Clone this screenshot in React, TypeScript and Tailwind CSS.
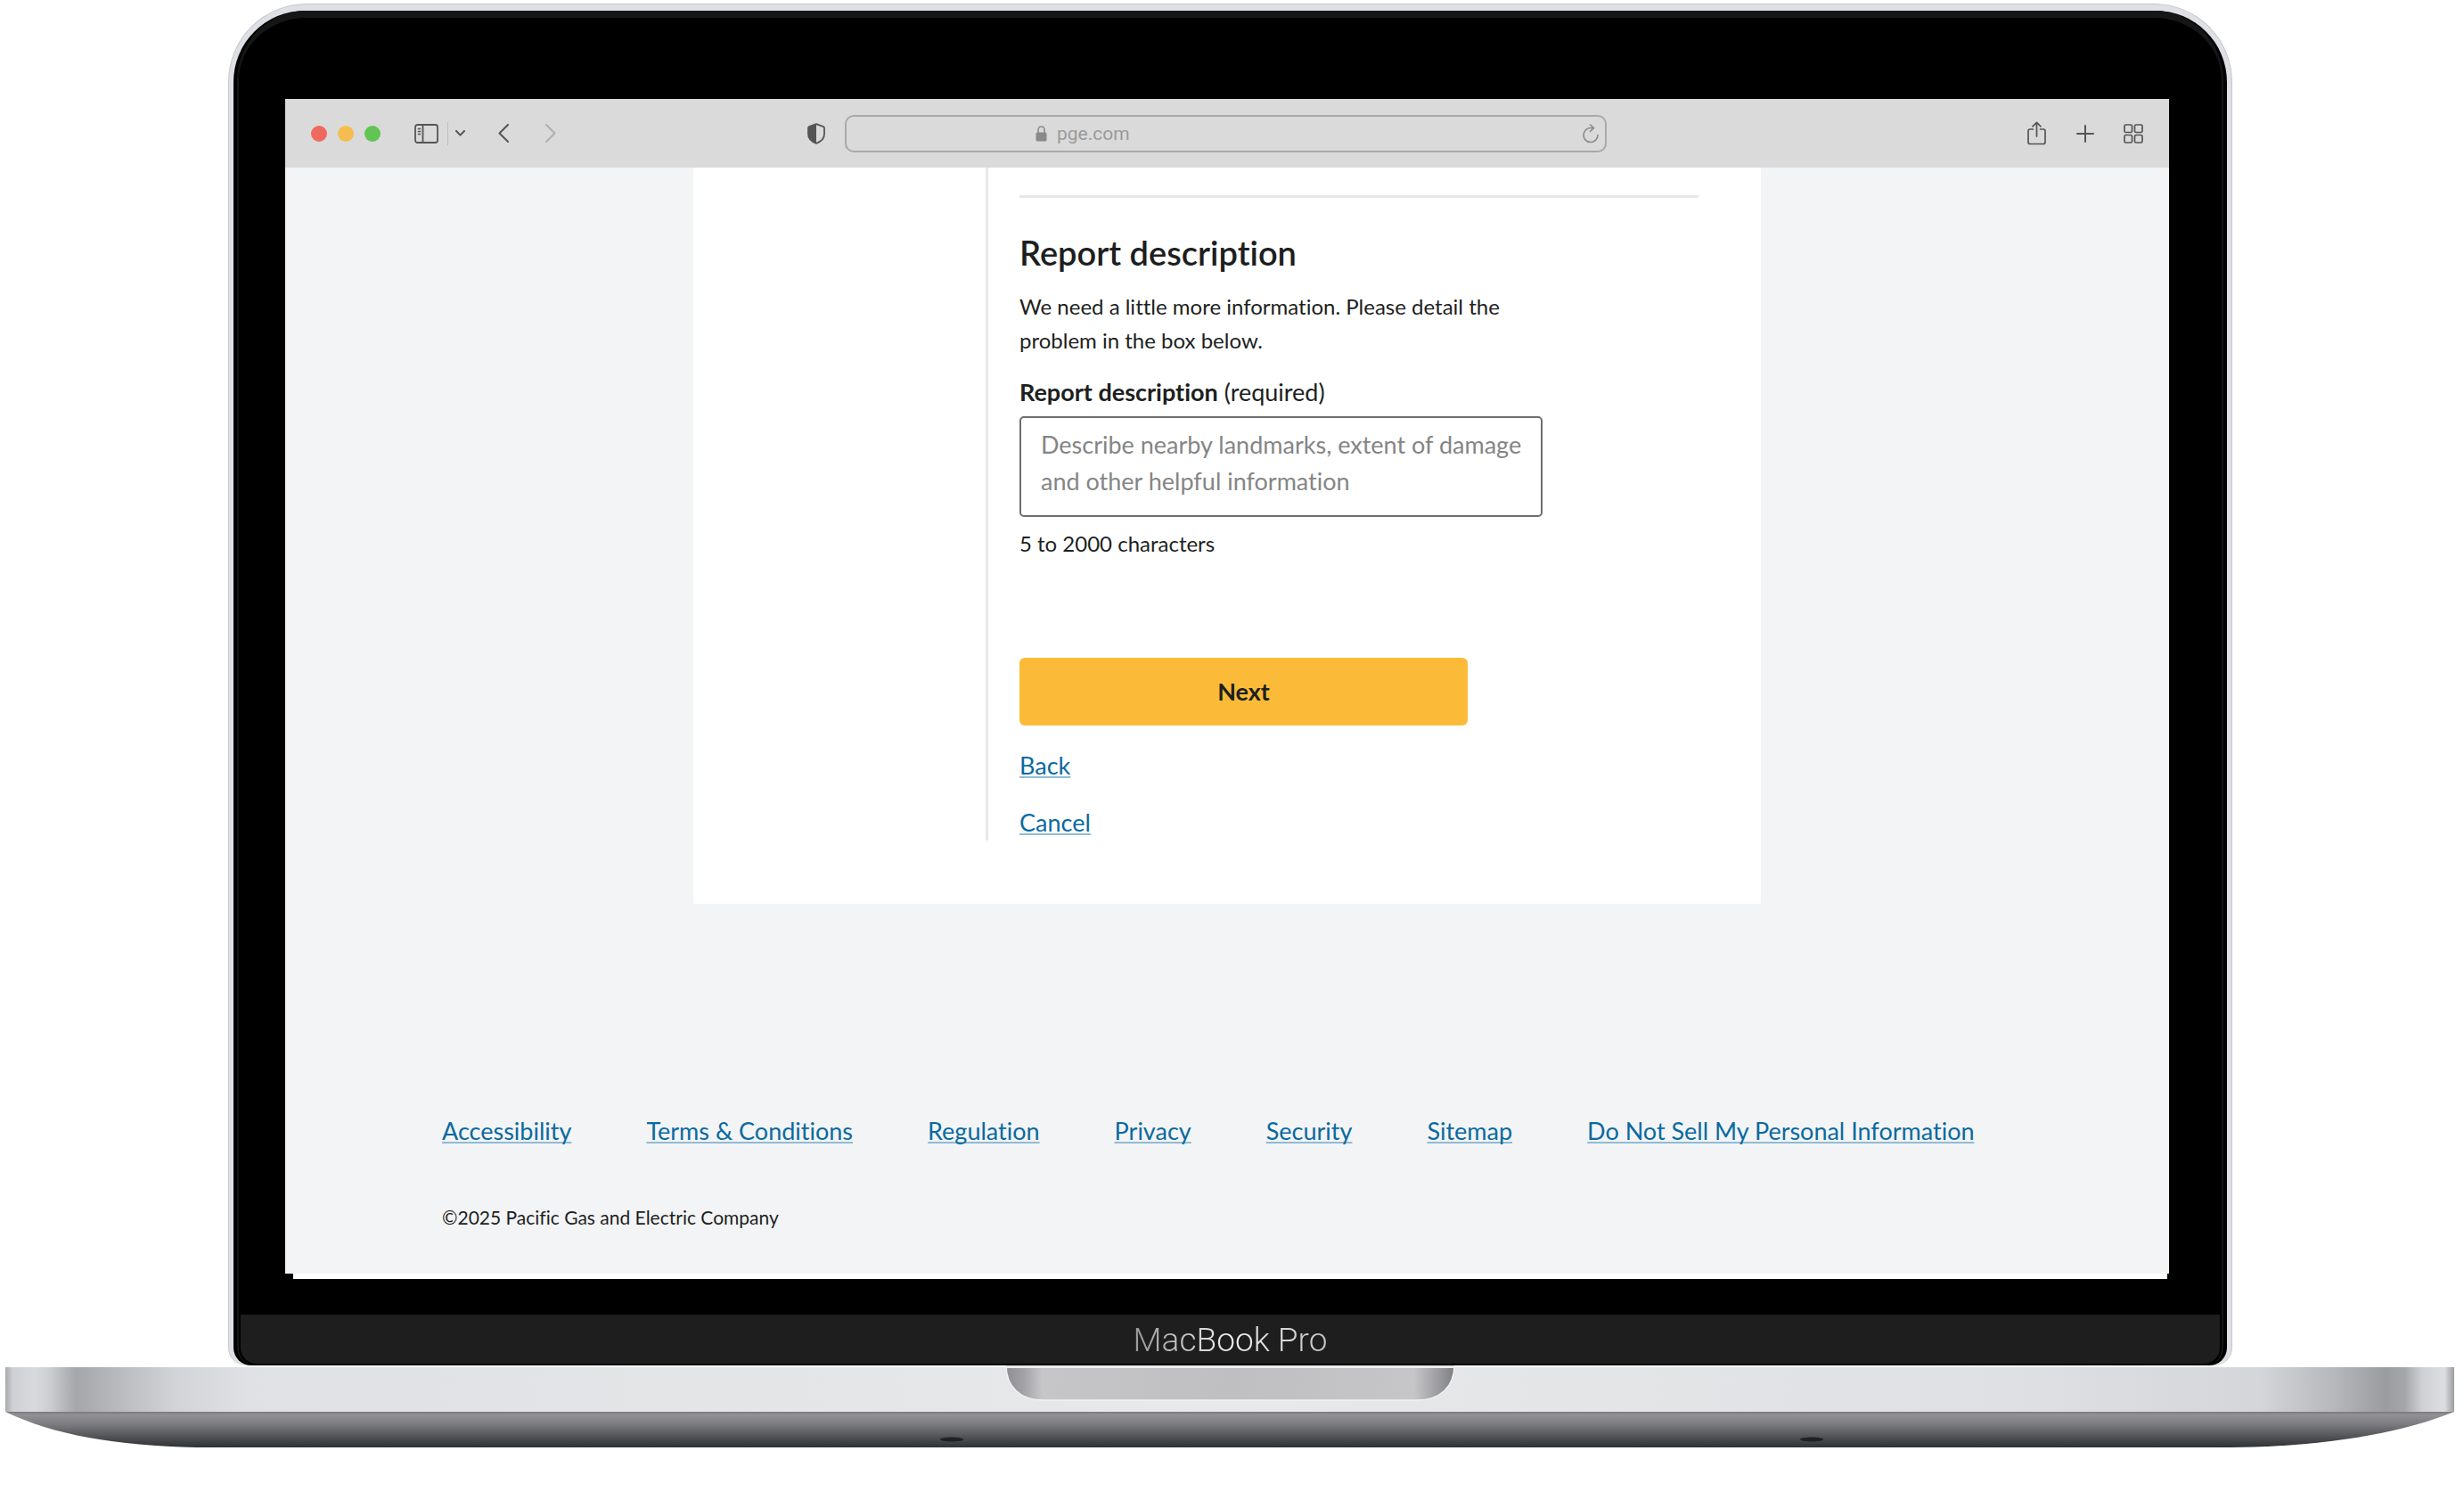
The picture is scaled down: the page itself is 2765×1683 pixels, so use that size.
import type { ReactNode } from 'react';

const footerLinks = [
  'Accessibility',
  'Terms & Conditions',
  'Regulation',
  'Privacy',
  'Security',
  'Sitemap',
  'Do Not Sell My Personal Information',
];

const TextLink = ({ children }: { children: ReactNode }) => (
  <a
    href="#"
    className="text-[27px] leading-10 text-[#0a6a9f] underline decoration-[#8fbcd6] decoration-2 underline-offset-2 [text-decoration-skip-ink:none]"
  >
    {children}
  </a>
);

const BrowserBar = () => (
  <header className="grid h-[77px] grid-cols-[1fr_855px_1fr] items-center bg-[#dadada] pl-[26px] pr-[29px] text-[#555]">
    <div className="flex items-center">
      <div className="ml-[3px] flex gap-3">
        <span className="size-[18px] rounded-full bg-[#ee6a5f]" />
        <span className="size-[18px] rounded-full bg-[#f5bd4f]" />
        <span className="size-[18px] rounded-full bg-[#61c454]" />
      </div>
      <button aria-label="Sidebar" className="ml-[38px]">
        <svg className="block h-[22px] w-[27px]" viewBox="0 0 27 22" fill="none" stroke="currentColor">
          <rect x="1" y="1" width="25" height="20" rx="2.5" strokeWidth="1.8" />
          <path d="M9.5 1v20" strokeWidth="1.8" />
          <path d="M3.8 5.5h3.4M3.8 8.5h3.4M3.8 11.5h3.4" strokeWidth="1.3" />
        </svg>
      </button>
      <span className="ml-[10px] h-[26px] w-px bg-[#bdbdbd]" />
      <button aria-label="Tab groups" className="ml-2">
        <svg className="block h-[7px] w-[11px]" viewBox="0 0 11 7" fill="none" stroke="currentColor" strokeWidth="2" strokeLinecap="round" strokeLinejoin="round">
          <path d="M1 1l4.5 4.6L10 1" />
        </svg>
      </button>
      <button aria-label="Back" className="ml-[37px]">
        <svg className="block h-[21px] w-3" viewBox="0 0 12 21" fill="none" stroke="currentColor" strokeWidth="2" strokeLinecap="round" strokeLinejoin="round">
          <path d="M11 1L1.5 10.5L11 20" />
        </svg>
      </button>
      <button aria-label="Forward" className="ml-[41px] text-[#b0b0b0]">
        <svg className="block h-[21px] w-3" viewBox="0 0 12 21" fill="none" stroke="currentColor" strokeWidth="2" strokeLinecap="round" strokeLinejoin="round">
          <path d="M1 1l9.5 9.5L1 20" />
        </svg>
      </button>
      <button aria-label="Privacy report" className="ml-auto mr-[22px]">
        <svg className="block h-6 w-5" viewBox="0 0 20 24" fill="none">
          <path d="M10 1.2L18 4.2Q19 4.6 19 5.8V12.5C19 17.8 15.5 20.8 10 22.8C4.5 20.8 1 17.8 1 12.5V5.8Q1 4.6 2 4.2Z" stroke="currentColor" strokeWidth="1.8" strokeLinejoin="round" />
          <path d="M10 1.2V22.8C4.5 20.8 1 17.8 1 12.5V5.8Q1 4.6 2 4.2Z" fill="currentColor" />
        </svg>
      </button>
    </div>

    <div className="flex h-[42px] items-center rounded-[10px] border-2 border-[#a9a9a9] pr-[7px] text-[#8a8a8a]">
      <svg className="ml-[212px] h-[18px] w-[13px]" viewBox="0 0 13 18" fill="none">
        <rect x="0.5" y="7.5" width="12" height="10" rx="1.6" fill="currentColor" />
        <path d="M3 8V5C3 2.6 4.4 1 6.5 1S10 2.6 10 5V8" stroke="currentColor" strokeWidth="1.6" />
      </svg>
      <input
        aria-label="Address"
        defaultValue="pge.com"
        className="ml-[11px] min-w-0 flex-1 bg-transparent pt-[2px] font-['Roboto',sans-serif] text-[21px] text-[#9a9a9a] outline-none"
      />
      <button aria-label="Reload">
        <svg className="block h-[22px] w-[18px]" viewBox="0 0 18 22" fill="none" stroke="currentColor" strokeWidth="1.6" strokeLinecap="round" strokeLinejoin="round">
          <path d="M10.5 4.7A8 8 0 1 0 17 12.5" />
          <path d="M8.5 1L12.5 4.7L8.5 8.5" />
        </svg>
      </button>
    </div>

    <div className="flex items-center justify-end">
      <button aria-label="Share">
        <svg className="block h-[27px] w-[21px]" viewBox="0 0 21 27" fill="none" stroke="currentColor" strokeWidth="1.7" strokeLinecap="round" strokeLinejoin="round">
          <path d="M6.5 9H3Q1 9 1 11V23.5Q1 25.5 3 25.5H18Q20 25.5 20 23.5V11Q20 9 18 9H14.5" />
          <path d="M10.5 17V1.5M6 5.8L10.5 1.3L15 5.8" />
        </svg>
      </button>
      <button aria-label="New tab" className="ml-[34px]">
        <svg className="block size-5" viewBox="0 0 20 20" stroke="currentColor" strokeWidth="2" strokeLinecap="round">
          <path d="M10 1v18M1 10h18" />
        </svg>
      </button>
      <button aria-label="Tab overview" className="ml-[33px]">
        <svg className="block size-[22px]" viewBox="0 0 22 22" fill="none" stroke="currentColor" strokeWidth="1.7">
          <rect x="1" y="1" width="8.5" height="8.5" rx="1.5" />
          <rect x="12.5" y="1" width="8.5" height="8.5" rx="1.5" />
          <rect x="1" y="12.5" width="8.5" height="8.5" rx="1.5" />
          <rect x="12.5" y="12.5" width="8.5" height="8.5" rx="1.5" />
        </svg>
      </button>
    </div>
  </header>
);

const ReportForm = () => (
  <main className="mx-auto max-w-[1198px] bg-white pb-[71px] pl-[328px] pr-[70px]">
    <form className="flex flex-col items-start border-l-[3px] border-[#e8e8e8] pl-[35px] pt-[31px]">
      <hr className="w-full border-t-[3px] border-[#e8e8e8]" />
      <h2 className="mt-[41px] text-[38px] font-semibold leading-10">Report description</h2>
      <p className="mt-[22px] max-w-[587px] text-[24px] leading-[38px]">
        We need a little more information. Please detail the problem in the box below.
      </p>
      <label htmlFor="description" className="mt-[19px] text-[27px] leading-10">
        <strong className="font-bold">Report description</strong> (required)
      </label>
      <textarea
        id="description"
        required
        minLength={5}
        maxLength={2000}
        aria-describedby="description-hint"
        placeholder="Describe nearby landmarks, extent of damage and other helpful information"
        className="mt-[7px] h-[113px] w-full max-w-[587px] resize-none overflow-hidden rounded-[5px] border-2 border-[#6e6e6e] pl-[22px] pr-2 pt-[9px] text-[27px] leading-[41px] placeholder:text-[#858585]"
      />
      <p id="description-hint" className="mt-[11px] text-[24px] leading-[38px]">
        5 to 2000 characters
      </p>
      <button
        type="button"
        className="mt-[109px] h-[76px] w-full max-w-[503px] rounded-md bg-[#fbbb38] text-[27px] font-bold"
      >
        Next
      </button>
      <div className="mt-[25px] flex flex-col items-start gap-6">
        <TextLink>Back</TextLink>
        <TextLink>Cancel</TextLink>
      </div>
    </form>
  </main>
);

const Footer = () => (
  <footer className="mt-[235px] px-44 pb-[47px]">
    <nav className="flex flex-wrap gap-x-[84px]">
      {footerLinks.map((item) => (
        <TextLink key={item}>{item}</TextLink>
      ))}
    </nav>
    <p className="mt-[61px] text-[21px] leading-8">©2025 Pacific Gas and Electric Company</p>
  </footer>
);

// Lower half of the laptop: deck edge, thumb notch and underside
const LaptopBase = () => (
  <svg className="block h-[94px] w-full" viewBox="0 0 2765 94" preserveAspectRatio="none" aria-hidden="true">
    <defs>
      <linearGradient id="deck" x1="0" x2="1" y1="0" y2="0">
        <stop offset="0" stopColor="#a8a9ad" />
        <stop offset="0.003" stopColor="#cfd0d4" />
        <stop offset="0.012" stopColor="#d9dadd" />
        <stop offset="0.018" stopColor="#cdced1" />
        <stop offset="0.029" stopColor="#a5a6aa" />
        <stop offset="0.045" stopColor="#b8b9bd" />
        <stop offset="0.07" stopColor="#d3d4d7" />
        <stop offset="0.1" stopColor="#e0e1e4" />
        <stop offset="0.5" stopColor="#e8e9ea" />
        <stop offset="0.82" stopColor="#dfe0e3" />
        <stop offset="0.92" stopColor="#d5d6d9" />
        <stop offset="0.95" stopColor="#b8b9bd" />
        <stop offset="0.972" stopColor="#9b9c9f" />
        <stop offset="0.98" stopColor="#a6a7aa" />
        <stop offset="0.987" stopColor="#d0d1d4" />
        <stop offset="0.996" stopColor="#dddee1" />
        <stop offset="1" stopColor="#9c9da1" />
      </linearGradient>
      <linearGradient id="under" x1="0" x2="0" y1="0" y2="1">
        <stop offset="0" stopColor="#77787b" />
        <stop offset="0.08" stopColor="#929296" />
        <stop offset="0.35" stopColor="#7c7c80" />
        <stop offset="0.7" stopColor="#525356" />
        <stop offset="1" stopColor="#303134" />
      </linearGradient>
      <linearGradient id="notch" x1="0" x2="1" y1="0" y2="0">
        <stop offset="0" stopColor="#8e8e93" />
        <stop offset="0.04" stopColor="#a3a3a7" />
        <stop offset="0.08" stopColor="#c6c6c8" />
        <stop offset="0.5" stopColor="#bfbfc1" />
        <stop offset="0.91" stopColor="#c6c6c8" />
        <stop offset="0.97" stopColor="#98989c" />
        <stop offset="1" stopColor="#7e7e83" />
      </linearGradient>
    </defs>
    <path d="M6 2H2754V52H6Z" fill="url(#deck)" />
    <path d="M6 52H2754C2690 78 2600 92 2490 92H220C130 90 60 78 6 52Z" fill="url(#under)" />
    <path d="M1129 0H1632C1632 24 1616 39 1590 39H1171C1145 39 1129 24 1129 0Z" fill="url(#notch)" stroke="#f2f2f3" strokeWidth="1.5" />
    <path d="M1130 2H1631" stroke="#efeff0" strokeWidth="2" />
    <ellipse cx="1068" cy="83" rx="13" ry="2.5" fill="#202124" />
    <ellipse cx="2033" cy="83" rx="13" ry="2.5" fill="#202124" />
  </svg>
);

const App = () => (
  <div className="min-h-screen bg-white pt-1 font-['Lato',sans-serif] text-[#1d1f21] [font-variant-ligatures:none]">
    {/* Lid */}
    <div className="ml-64 mr-[260px] rounded-b-[20px] rounded-t-[88px] border border-b-0 border-[#c6c8cc] bg-[#dfe0e5] px-[5px] pt-[7px]">
      <div className="rounded-b-[20px] rounded-t-[80px] bg-black px-1">
        <div className="rounded-b-[20px] rounded-t-[78px] border-x-2 border-t-8 border-[#161616] bg-black pt-[91px]">
          {/* Screen */}
          <div className="ml-[52px] mr-[59px] bg-[#f3f4f6]">
            <BrowserBar />
            <ReportForm />
            <Footer />
          </div>
          <div className="mx-[61px] h-[6px] bg-white" />
          {/* Chin */}
          <div className="mx-[2px] mt-10 flex h-[55px] items-center justify-center rounded-b-[18px] bg-[#1e1e1e] pt-[2px]">
            <span className="bg-linear-to-r from-[#9a9a9a] via-[#f0f0f0] to-[#c4c4c4] bg-clip-text font-['Roboto',sans-serif] text-[37px] font-light leading-none text-transparent">
              MacBook Pro
            </span>
          </div>
          <div className="h-[2px]" />
        </div>
      </div>
    </div>
    <LaptopBase />
  </div>
);

export default App;
